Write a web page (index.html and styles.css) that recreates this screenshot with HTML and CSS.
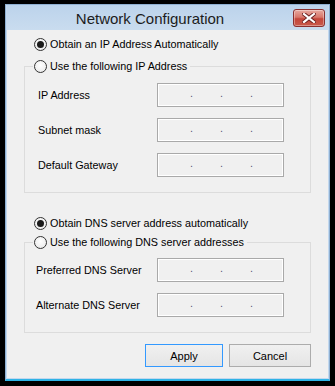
FILE: index.html
```html
<!DOCTYPE html>
<html>
<head>
<meta charset="utf-8">
<link rel="stylesheet" href="styles.css">
</head>
<body>
<div class="window">
  <div class="titlebar">
    <div class="title">Network Configuration</div>
    <button class="close" aria-label="Close">
      <svg width="14" height="10" viewBox="0 0 14 10">
        <path d="M2 1 L12 9 M12 1 L2 9" stroke="#6b2020" stroke-width="4" stroke-linecap="square" fill="none"/>
        <path d="M2 1 L12 9 M12 1 L2 9" stroke="#ffffff" stroke-width="2.2" stroke-linecap="square" fill="none"/>
      </svg>
    </button>
  </div>
  <div class="client">
    <label class="radio-row first"><input type="radio" name="ip" checked><span>Obtain an IP Address Automatically</span></label>
    <fieldset class="group ipgroup">
      <legend><label class="radio-row"><input type="radio" name="ip"><span>Use the following IP Address</span></label></legend>
      <div class="row"><span class="lbl">IP Address</span><div class="ipbox"><i>.</i><i>.</i><i>.</i></div></div>
      <div class="row"><span class="lbl">Subnet mask</span><div class="ipbox"><i>.</i><i>.</i><i>.</i></div></div>
      <div class="row"><span class="lbl">Default Gateway</span><div class="ipbox"><i>.</i><i>.</i><i>.</i></div></div>
    </fieldset>
    <label class="radio-row dns-auto"><input type="radio" name="dns" checked><span>Obtain DNS server address automatically</span></label>
    <fieldset class="group dnsgroup">
      <legend><label class="radio-row"><input type="radio" name="dns"><span>Use the following DNS server addresses</span></label></legend>
      <div class="row"><span class="lbl">Preferred DNS Server</span><div class="ipbox"><i>.</i><i>.</i><i>.</i></div></div>
      <div class="row"><span class="lbl">Alternate DNS Server</span><div class="ipbox"><i>.</i><i>.</i><i>.</i></div></div>
    </fieldset>
    <div class="buttons">
      <button class="btn btn-default">Apply</button>
      <button class="btn btn-cancel">Cancel</button>
    </div>
  </div>
</div>
</body>
</html>
```

FILE: styles.css
```css
html, body {
  margin: 0;
  padding: 0;
  background: #000;
}
body {
  width: 335px;
  height: 386px;
  overflow: hidden;
  font-family: "Liberation Sans", Arial, sans-serif;
  font-size: 10.8px;
  color: #000;
}
.window {
  box-sizing: border-box;
  margin: 4px 0 0 5px;
  width: 325px;
  height: 377px;
  border: 1px solid #8fb0d2;
  border-bottom: 2px solid #2fb3e6;
  background: #c3d8ee;
  padding: 0 1px 1px 1px;
  display: flex;
  flex-direction: column;
}
.titlebar {
  height: 25px;
  flex: none;
  display: flex;
  align-items: flex-start;
  background: linear-gradient(#bcd3eb, #c9dcef);
}
.title {
  flex: 1;
  text-align: center;
  font-size: 15px;
  line-height: 18px;
  padding-top: 5px;
  color: #1c1c1c;
}
.close {
  box-sizing: border-box;
  width: 32px;
  height: 18px;
  margin: 4px 3px 0 0;
  padding: 0;
  border: 1px solid #8a3030;
  border-radius: 3px;
  background: linear-gradient(#e7a9a0 0%, #d8776b 45%, #c4463a 55%, #c95a4c 100%);
  box-shadow: inset 0 0 0 1px rgba(255,255,255,0.35);
  display: flex;
  align-items: center;
  justify-content: center;
}
.client {
  flex: 1;
  background: #f0f0f0;
  display: flex;
  flex-direction: column;
}
.radio-row {
  display: flex;
  align-items: center;
  height: 16px;
  line-height: 16px;
  gap: 3px;
  white-space: nowrap;
}
.radio-row input {
  appearance: none;
  -webkit-appearance: none;
  box-sizing: border-box;
  width: 13px;
  height: 13px;
  margin: 0;
  border: 1px solid #333;
  border-radius: 50%;
  background: radial-gradient(circle at 50% 40%, #ffffff, #e6e6e6);
  position: relative;
  flex: none;
}
.radio-row input:checked::after {
  content: "";
  position: absolute;
  left: 2px;
  top: 2px;
  width: 7px;
  height: 7px;
  border-radius: 50%;
  background: #1a1a1a;
}
.first {
  margin: 6px 0 0 27px;
}
.group {
  margin: 6px 17px 0 17px;
  padding: 9px 0 15px 0;
  border: 1px solid #dcdcdc;
  min-width: 0;
  display: flex;
  flex-direction: column;
  gap: 11px;
}
.group legend {
  margin-left: 8px;
  padding: 0 3px 0 1px;
}
.row {
  display: grid;
  grid-template-columns: 119px 127px;
  align-items: center;
  height: 24px;
  padding-left: 13px;
}
.dnsgroup .row {
  padding-left: 11px;
  grid-template-columns: 121px 127px;
}
.ipbox {
  box-sizing: border-box;
  height: 24px;
  border: 1px solid #a9a9a9;
  box-shadow: inset 0 0 0 1px #ffffff;
  background: #f0f0f0;
  display: flex;
  padding-left: 32px;
  gap: 27px;
  line-height: 18px;
  color: #5a5a78;
}
.ipbox i {
  font-style: normal;
  width: 3px;
}
.dns-auto {
  margin: 22px 0 0 27px;
}
.dnsgroup {
  margin-top: 3px;
  padding-top: 8px;
}
.buttons {
  display: flex;
  justify-content: flex-end;
  gap: 6px;
  margin: 11px 17px 0 0;
}
.btn {
  box-sizing: border-box;
  height: 23px;
  font-family: inherit;
  font-size: 11px;
  color: #000;
  border: 1px solid #acacac;
  background: linear-gradient(#f0f0f0, #e5e5e5);
  padding: 0;
}
.btn-default {
  width: 78px;
  border-color: #3399ff;
}
.btn-cancel {
  width: 82px;
}
```
